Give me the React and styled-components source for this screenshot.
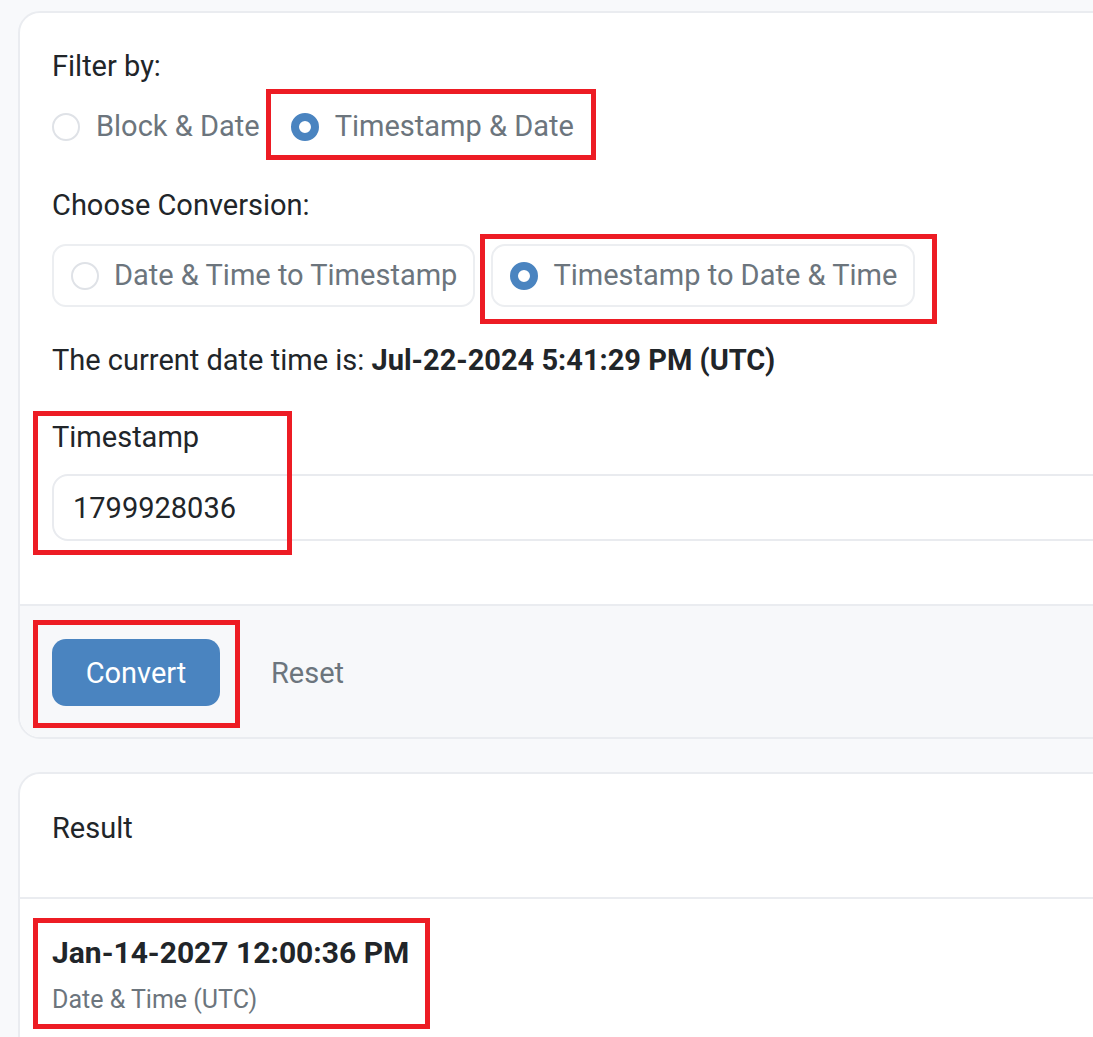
import React, { useState } from "react";
import styled, { createGlobalStyle, css } from "styled-components";

const GlobalStyle = createGlobalStyle`
  html, body {
    margin: 0;
    padding: 0;
    background: #f8f9fb;
    overflow: hidden;
  }
  * {
    box-sizing: border-box;
  }
  body {
    font-family: Roboto, "Noto Sans", Arial, sans-serif;
    color: #212529;
  }
`;

const Page = styled.div`
  display: flex;
  flex-direction: column;
  gap: 33px;
  padding: 11px 0 0 18px;
  width: 1260px;
`;

const Card = styled.section`
  background: #fff;
  border: 2px solid #eaecf0;
  border-radius: 22px;
  overflow: hidden;
`;

const CardBody = styled.div`
  padding: 34px 32px 63px;
`;

const FieldLabel = styled.div`
  font-size: 29px;
  line-height: 39px;
  color: #212529;
  margin-top: ${(p) => p.$gap || 0}px;
`;

const RadioRow = styled.div`
  display: flex;
  align-items: center;
  gap: ${(p) => p.$gap || 31}px;
  margin-top: ${(p) => p.$top || 0}px;
`;

const RadioItem = styled.label`
  position: relative;
  display: inline-flex;
  align-items: center;
  gap: 16px;
  font-size: 29px;
  line-height: 39px;
  color: #6c757d;
  cursor: pointer;
  white-space: nowrap;
`;

const RadioDot = styled.span`
  width: 28px;
  height: 28px;
  border-radius: 50%;
  flex-shrink: 0;
  background: #fff;
  ${(p) =>
    p.$checked
      ? css`
          border: 8px solid #4a84c0;
        `
      : css`
          border: 2px solid #dfe2e7;
        `}
`;

const OptionBox = styled(RadioItem)`
  height: 63px;
  padding: 0 16px 0 17px;
  border: 2px solid #eceef1;
  border-radius: 14px;
  gap: 15px;
`;

const CurrentDate = styled.p`
  margin: 34px 0 0;
  font-size: 29px;
  line-height: 39px;

  strong {
    font-weight: 700;
  }
`;

const Group = styled.div`
  position: relative;
  margin-top: 38px;
`;

const Input = styled.input`
  display: block;
  width: 100%;
  height: 67px;
  margin-top: 17px;
  padding: 0 19px;
  border: 2px solid #e9ebef;
  border-radius: 16px;
  font-family: inherit;
  font-size: 29px;
  color: #212529;
  background: #fff;
  outline: none;
`;

const CardFooter = styled.div`
  display: flex;
  align-items: center;
  gap: 51px;
  padding: 33px 32px 31px;
  background: #f7f8fa;
  border-top: 2px solid #eaecf0;
`;

const ConvertButton = styled.button`
  position: relative;
  width: 168px;
  height: 67px;
  border: none;
  border-radius: 14px;
  background: #4a84c0;
  color: #fff;
  font-family: inherit;
  font-size: 29px;
  cursor: pointer;
`;

const ResetButton = styled.button`
  border: none;
  background: none;
  padding: 0;
  font-family: inherit;
  font-size: 29px;
  color: #6c757d;
  cursor: pointer;
`;

const CardHeader = styled.div`
  height: 125px;
  padding: 35px 32px 0;
  border-bottom: 2px solid #eaecf0;
  font-size: 29px;
  line-height: 39px;
`;

const ResultBody = styled.div`
  padding: 35px 32px 40px;
`;

const ResultBlock = styled.div`
  position: relative;
  display: inline-block;
`;

const ResultValue = styled.div`
  font-size: 30px;
  font-weight: 700;
  line-height: 38px;
`;

const ResultCaption = styled.div`
  margin-top: 12px;
  font-size: 25px;
  line-height: 32px;
  color: #6c757d;
`;

const Mark = styled.span`
  position: absolute;
  left: ${(p) => p.$x}px;
  top: ${(p) => p.$y}px;
  width: ${(p) => p.$w}px;
  height: ${(p) => p.$h}px;
  border: 5px solid #ed1c24;
  pointer-events: none;
`;

export default function App() {
  const [filter, setFilter] = useState("timestamp");
  const [mode, setMode] = useState("toDate");
  const [value, setValue] = useState("1799928036");

  return (
    <>
      <GlobalStyle />
      <Page>
        <Card>
          <CardBody>
            <FieldLabel>Filter by:</FieldLabel>
            <RadioRow $top={21}>
              <RadioItem onClick={() => setFilter("block")}>
                <RadioDot $checked={filter === "block"} />
                Block &amp; Date
              </RadioItem>
              <RadioItem onClick={() => setFilter("timestamp")}>
                <RadioDot $checked={filter === "timestamp"} />
                Timestamp &amp; Date
                <Mark $x={-25} $y={-18} $w={330} $h={71} />
              </RadioItem>
            </RadioRow>

            <FieldLabel $gap={40}>Choose Conversion:</FieldLabel>
            <RadioRow $top={19} $gap={16}>
              <OptionBox onClick={() => setMode("toTimestamp")}>
                <RadioDot $checked={mode === "toTimestamp"} />
                Date &amp; Time to Timestamp
              </OptionBox>
              <OptionBox onClick={() => setMode("toDate")}>
                <RadioDot $checked={mode === "toDate"} />
                Timestamp to Date &amp; Time
                <Mark $x={-13} $y={-12} $w={457} $h={90} />
              </OptionBox>
            </RadioRow>

            <CurrentDate>
              The current date time is: <strong>Jul-22-2024 5:41:29 PM (UTC)</strong>
            </CurrentDate>

            <Group>
              <FieldLabel>Timestamp</FieldLabel>
              <Input value={value} onChange={(e) => setValue(e.target.value)} />
              <Mark $x={-19} $y={-7} $w={259} $h={144} />
            </Group>
          </CardBody>
          <CardFooter>
            <ConvertButton type="button">
              Convert
              <Mark $x={-19} $y={-19} $w={207} $h={108} />
            </ConvertButton>
            <ResetButton type="button" onClick={() => setValue("")}>
              Reset
            </ResetButton>
          </CardFooter>
        </Card>

        <Card>
          <CardHeader>Result</CardHeader>
          <ResultBody>
            <ResultBlock>
              <ResultValue>Jan-14-2027 12:00:36 PM</ResultValue>
              <ResultCaption>Date &amp; Time (UTC)</ResultCaption>
              <Mark $x={-19} $y={-16} $w={397} $h={111} />
            </ResultBlock>
          </ResultBody>
        </Card>
      </Page>
    </>
  );
}
